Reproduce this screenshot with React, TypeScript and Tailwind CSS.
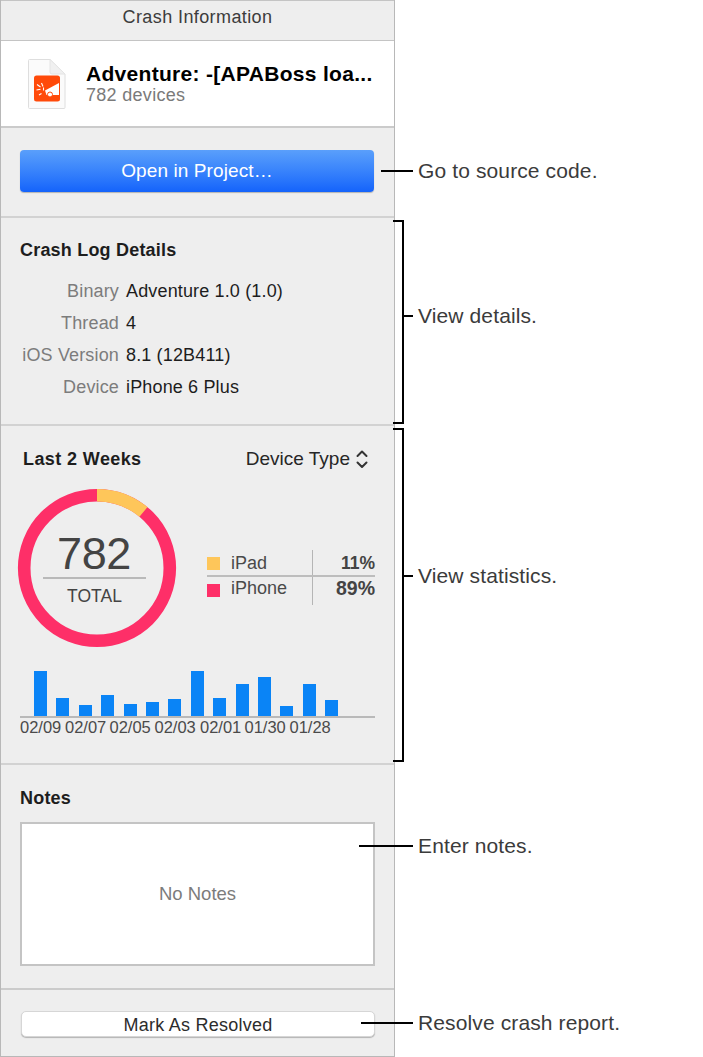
import React from "react";

const bars = [45, 18, 11, 21, 12, 14, 17, 45, 18, 32, 39, 10, 32, 16];
const dates = [
  ["02/09", "w-[45px]"],
  ["02/07", "w-[44.5px]"],
  ["02/05", "w-[45px]"],
  ["02/03", "w-[45.5px]"],
  ["02/01", "w-[44.5px]"],
  ["01/30", "w-[45px]"],
  ["01/28", "w-[45px]"],
];

function FileIcon() {
  return (
    <svg width="38" height="50" viewBox="0 0 38 50" className="shrink-0">
      <path d="M0.5 1.5 a1 1 0 0 1 1 -1 H22 L37 15 V48.5 a1 1 0 0 1 -1 1 H1.5 a1 1 0 0 1 -1 -1 Z" fill="#fbfbfb" stroke="#dedede" />
      <path d="M22 0.5 V13 a2 2 0 0 0 2 2 H37 Z" fill="#f0f0f0" stroke="#e4e4e4" />
      <rect x="6" y="16.5" width="26" height="26" rx="2.5" fill="#ff4a0a" />
      <path d="M17 31.5 L31 24 V36 H18.5 Z" fill="#fff" />
      <circle cx="22" cy="35.5" r="2.5" fill="#fff" stroke="#ff4a0a" strokeWidth="1" />
      <path d="M13.5 24 l1.5 3.5 M9 25.5 l3.5 2.5 M15.5 28.5 v3 M8.5 31 l4 -0.8 M11 36 l2.5 -1.5" stroke="#fff" strokeWidth="1.1" />
    </svg>
  );
}

function Donut() {
  const r = 72.8;
  const c = 2 * Math.PI * r;
  return (
    <svg width="160" height="160" viewBox="0 0 160 160" className="shrink-0">
      <circle cx="80" cy="80" r={r} fill="none" stroke="#fe2f68" strokeWidth="12.6" />
      <circle
        cx="80"
        cy="80"
        r={r}
        fill="none"
        stroke="#fec65a"
        strokeWidth="12.6"
        strokeDasharray={`${c * 0.11} ${c}`}
        transform="rotate(-90 80 80)"
      />
    </svg>
  );
}

function Row({ label, value }: { label: string; value: string }) {
  return (
    <div className="flex h-[32px] items-center text-[18px] tracking-[0.15px]">
      <div className="w-[99px] whitespace-nowrap text-right text-[#7c7c7c]">{label}</div>
      <div className="ml-[7px] text-[#1d1d1d]">{value}</div>
    </div>
  );
}

function Callout({ top, left, width, text }: { top: number; left: number; width: number; text: string }) {
  return (
    <>
      <div className="absolute h-[2px] bg-black" style={{ top, left, width }} />
      <div
        className="absolute whitespace-nowrap text-[21px] leading-[24px] tracking-[0.12px] text-[#3b3b3b]"
        style={{ top: top - 11, left: 418 }}
      >
        {text}
      </div>
    </>
  );
}

function Bracket({ top, height }: { top: number; height: number }) {
  return (
    <div
      className="absolute left-[393px] w-[11px] border-y-2 border-r-2 border-black"
      style={{ top, height }}
    />
  );
}

export default function App() {
  return (
    <div className="relative h-[1057px] w-[703px] overflow-hidden bg-white font-['Liberation_Sans',Arial,sans-serif]">
      <div className="flex h-[1057px] w-[395px] flex-col border-x border-[#b8b8b8] bg-[#eeeeee]">
        <div className="flex h-[41px] shrink-0 items-center justify-center border-y border-t-[#c4c4c4] border-b-[#c4c4c4] pb-[6px] text-[18px] tracking-[0.4px] text-[#3c3c3c]">
          Crash Information
        </div>

        <div className="flex h-[87px] shrink-0 items-center gap-[20px] border-b-2 border-[#cbcbcb] bg-white pl-[27px] pt-[1px]">
          <FileIcon />
          <div className="flex min-w-0 flex-col">
            <div className="whitespace-nowrap text-[21px] font-bold leading-[24px] tracking-[0.3px] text-black">
              Adventure: -[APABoss loa...
            </div>
            <div className="mt-[-2px] text-[18px] leading-[22px] tracking-[0.3px] text-[#7a7a7a]">782 devices</div>
          </div>
        </div>

        <div className="flex h-[90px] shrink-0 items-start border-b-2 border-[#d2d2d2] px-[19px] pt-[22px]">
          <div className="flex h-[42px] w-[354px] items-center justify-center rounded-[4px] bg-gradient-to-b from-[#5a9ffb] to-[#1463fb] text-[19px] tracking-[0.1px] text-white shadow-[0_1px_1px_rgba(0,0,0,0.25)]">
            Open in Project…
          </div>
        </div>

        <div className="h-[208px] shrink-0 border-b-2 border-[#d2d2d2] px-[19px] pt-[21px]">
          <div className="text-[18px] font-bold leading-[22px] tracking-[0.2px] text-[#1d1d1d]">Crash Log Details</div>
          <div className="mt-[14px] flex flex-col">
            <Row label="Binary" value="Adventure 1.0 (1.0)" />
            <Row label="Thread" value="4" />
            <Row label="iOS Version" value="8.1 (12B411)" />
            <Row label="Device" value="iPhone 6 Plus" />
          </div>
        </div>

        <div className="h-[339px] shrink-0 border-b-2 border-[#d2d2d2] pl-[16px] pr-[19px] pt-[21px]">
          <div className="flex h-[24px] items-center justify-between pl-[6px]">
            <div className="text-[18px] font-bold tracking-[0.4px] text-[#1d1d1d]">Last 2 Weeks</div>
            <div className="flex items-center gap-[6px] pr-[7px] text-[19px] text-[#262626]">
              Device Type
              <svg width="12" height="20" viewBox="0 0 12 20" fill="none" stroke="#333" strokeWidth="2" strokeLinecap="round" strokeLinejoin="round">
                <path d="M1.5 7 L6 2.5 L10.5 7" />
                <path d="M1.5 13.5 L6 18 L10.5 13.5" />
              </svg>
            </div>
          </div>

          <div className="mt-[17px] flex items-start">
            <div className="relative h-[160px] w-[160px]">
              <Donut />
              <div className="absolute left-[26px] top-[42px] flex w-[103px] flex-col items-center">
                <div className="h-[49px] w-full border-b-2 border-[#b9b9b9] pr-[1px] pt-[1px] text-center text-[45px] font-normal leading-[46px] tracking-[-0.3px] text-[#444]">
                  782
                </div>
                <div className="mt-[7px] text-[17.5px] leading-[20px] text-[#444]">TOTAL</div>
              </div>
            </div>

            <div className="ml-[30px] mt-[62px] flex h-[55px] w-[168px] flex-col">
              <div className="flex h-[27px] items-center border-b-2 border-[#bdbdbd]">
                <div className="mt-[1px] h-[13px] w-[13px] bg-[#fec65a]" />
                <div className="ml-[11px] mt-[2px] w-[81px] text-[18px] text-[#4a4a4a]">iPad</div>
                <div className="h-full w-[1px] bg-[#b5b5b5]" />
                <div className="mt-[2px] flex-1 text-right text-[17.5px] font-bold text-[#444]">11%</div>
              </div>
              <div className="flex h-[28px] items-center">
                <div className="mt-[-1px] h-[13px] w-[13px] bg-[#fe2f68]" />
                <div className="ml-[11px] mt-[-5px] w-[81px] text-[18px] text-[#4a4a4a]">iPhone</div>
                <div className="h-full w-[1px] bg-[#b5b5b5]" />
                <div className="mt-[-5px] flex-1 text-right text-[19.5px] font-bold text-[#444]">89%</div>
              </div>
            </div>
          </div>

          <div className="mt-[23px] ml-[3px] flex h-[47px] w-[355px] items-end gap-[9.4px] border-b-2 border-[#b9b9b9] pl-[14px]">
            {bars.map((h, i) => (
              <div key={i} className="w-[13px] bg-[#0a84f6]" style={{ height: h }} />
            ))}
          </div>
          <div className="ml-[3px] flex text-[16.5px] leading-[18px] text-[#4a4a4a]">
            {dates.map(([d, w]) => (
              <div key={d} className={w}>
                {d}
              </div>
            ))}
          </div>
        </div>

        <div className="h-[225px] shrink-0 border-b-2 border-[#cbcbcb] px-[19px] pt-[22px]">
          <div className="text-[18px] font-bold leading-[22px] tracking-[0.2px] text-[#1d1d1d]">Notes</div>
          <div className="mt-[13px] flex h-[144px] w-[355px] items-center justify-center border-2 border-[#c4c4c4] bg-white text-[18.5px] text-[#7c7c7c]">
            No Notes
          </div>
        </div>

        <div className="flex-1 border-b border-[#b8b8b8] px-[20px] pt-[21px]">
          <div className="flex h-[26px] w-[354px] items-center justify-center rounded-[5px] border border-[#d6d6d6] bg-white pt-[2px] text-[18px] tracking-[0.25px] text-[#2c2c2c] shadow-[0_1px_1px_rgba(0,0,0,0.25)]">
            Mark As Resolved
          </div>
        </div>
      </div>

      <Callout top={170} left={381} width={32} text="Go to source code." />
      <Bracket top={220} height={204} />
      <Callout top={315} left={403} width={10} text="View details." />
      <Bracket top={428} height={334} />
      <Callout top={575} left={403} width={10} text="View statistics." />
      <Callout top={845} left={359} width={54} text="Enter notes." />
      <Callout top={1022} left={361} width={52} text="Resolve crash report." />
    </div>
  );
}
